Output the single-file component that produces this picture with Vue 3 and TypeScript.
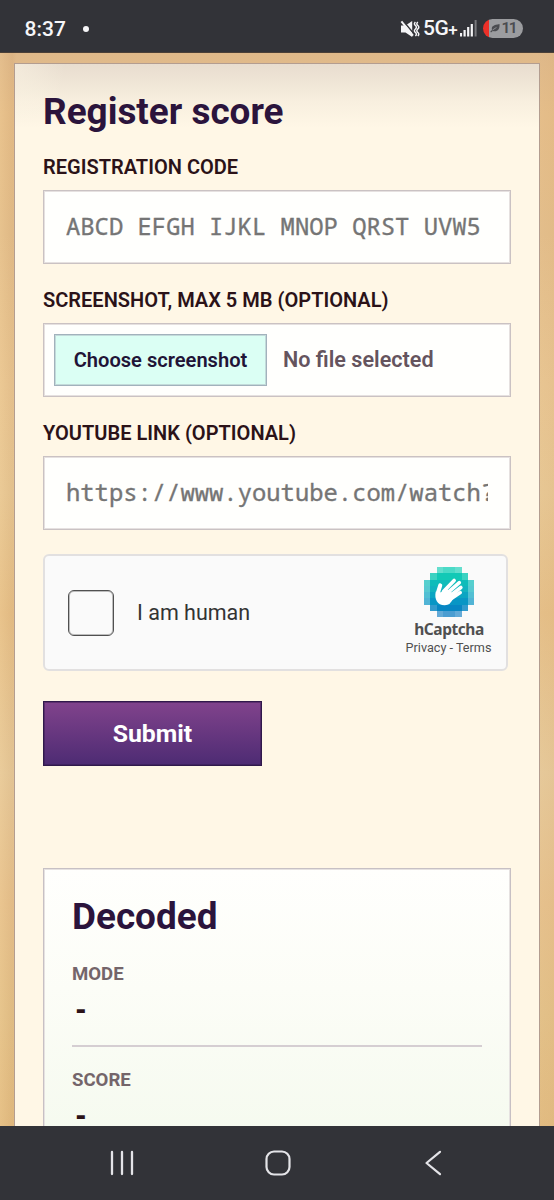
<script setup lang="ts">
interface Cell { x: number; y: number; fill: string; opacity: number }
interface ResultRow { label: string; value: string }

const rows: ResultRow[] = [
  { label: 'Mode', value: '-' },
  { label: 'Score', value: '-' },
]

const insets = [2, 1, 0, 0, 0, 0, 1, 2]
const left = ['#00ccb1', '#12c9b6', '#0fbcba', '#12b3bf', '#0aa5c2', '#0896c5', '#0786c3', '#0075bf']
const cells: Cell[] = []
insets.forEach((inset, y) => {
  for (let x = inset; x < 8 - inset; x++) {
    const edge = x === inset || x === 7 - inset
    const rim = y === 0 || y === 7 || x === 0 || x === 7
    cells.push({ x: x * 4, y: y * 4, fill: left[y], opacity: rim ? (edge && (y === 0 || y === 7) ? 0.6 : 0.7) : edge ? 0.82 : 1 })
  }
})
</script>

<template>
  <div class="screen">
    <header class="status">
      <span class="clock">8:37</span><span class="dot"></span>
      <div class="status-right">
        <svg class="mute" width="20" height="18" viewBox="0 0 20 18">
          <path d="M1 5.5h4.5L12.2 1v16L5.5 12.5H1z" fill="#f4f4f6" />
          <path d="M3 .8L14 14" stroke="#323338" stroke-width="1.5" />
          <path d="M1.4 1.4L13 15.6" stroke="#f4f4f6" stroke-width="2" />
          <path d="M15.4 2q-2 1.8 0 3.5t0 3.5 0 3.5 0 3.5M17.8 2q-2 1.8 0 3.5t0 3.5 0 3.5 0 3.5" fill="none" stroke="#f4f4f6" stroke-width="1.5" />
        </svg>
        <span class="network">5G<span class="plus">+</span></span>
        <svg class="signal" width="17" height="17" viewBox="0 0 17 17">
          <path d="M1 13v3.5M4.6 10v6.5M8.2 7v9.5M11.8 4v12.5" stroke="#f4f4f6" stroke-width="2.2" />
          <path d="M15.6 0v16.5" stroke="#77787c" stroke-width="2" />
        </svg>
        <div class="battery">
          <svg width="10" height="9" viewBox="0 0 10 9">
            <path d="M9.5 0C10 6 7 8 2.8 7L1 8.6.3 7.6 2 6C1 2 4 1 9.5 0z" fill="#4b4c50" />
            <path d="M2.5 6L6.5 3.4" stroke="#9b9c9f" stroke-width=".8" />
          </svg>
          <span>11</span>
        </div>
      </div>
    </header>

    <main class="page">
      <section class="panel">
        <h1>Register score</h1>
        <label class="caption">Registration code</label>
        <div class="field mono"><span>ABCD EFGH IJKL MNOP QRST UVW5</span></div>
        <label class="caption">Screenshot, max 5 MB (optional)</label>
        <div class="field file">
          <button class="choose">Choose screenshot</button>
          <span class="nofile">No file selected</span>
        </div>
        <label class="caption">YouTube link (optional)</label>
        <div class="field mono"><span>https://www.youtube.com/watch?</span></div>

        <div class="captcha">
          <div class="checkbox"></div>
          <span class="human">I am human</span>
          <div class="brand">
            <svg width="50" height="50" viewBox="0 0 32 32">
              <rect v-for="(c, i) in cells" :key="i" :x="c.x" :y="c.y" width="4" height="4" :fill="c.fill" :fill-opacity="c.opacity" shape-rendering="crispEdges" />
              <g stroke="#fff" stroke-linecap="round" stroke-linejoin="round" fill="none">
                <path d="M10.4 11.8L8.9 16.5" stroke-width="2.6" />
                <path d="M12.5 15.7L19.3 8.6M14.5 17L22.6 10M16.5 18.5L23.6 13.1M17.3 20.3L23.2 16.4" stroke-width="2.3" />
              </g>
              <path d="M7.5 15.8L9.8 15.6Q10.5 17 12 15.2L15 14.2L19.4 17.6L18.6 20.2Q17 24.5 13.3 24.5C8.5 24.5 6.5 20.4 7.5 15.8z" fill="#fff" />
            </svg>
            <span class="name">hCaptcha</span>
            <span class="links">Privacy - Terms</span>
          </div>
        </div>

        <button class="submit">Submit</button>

        <section class="decoded">
          <h2>Decoded</h2>
          <div v-for="row in rows" :key="row.label" class="result">
            <span class="key">{{ row.label }}</span>
            <span class="value">{{ row.value }}</span>
          </div>
        </section>
      </section>
    </main>

    <nav class="navbar">
      <svg width="24" height="26" viewBox="0 0 24 26"><path d="M2 2v22M12 2v22M22 2v22" stroke="#e4e4e8" stroke-width="2.3" stroke-linecap="round" /></svg>
      <svg width="26" height="26" viewBox="0 0 26 26"><rect x="1.5" y="1.5" width="23" height="23" rx="7.5" fill="none" stroke="#e4e4e8" stroke-width="2.2" /></svg>
      <svg width="18" height="26" viewBox="0 0 18 26"><path d="M16 1.8L2.5 13L16 24.2" fill="none" stroke="#e4e4e8" stroke-width="2.2" stroke-linecap="round" stroke-linejoin="round" /></svg>
    </nav>
  </div>
</template>

<style>
html, body { margin: 0; overflow: hidden; }
</style>

<style scoped>
* { box-sizing: border-box; }
.screen { width: 554px; height: 1200px; display: flex; flex-direction: column; overflow: hidden; font-family: Roboto, "Liberation Sans", sans-serif; color: #2b1218; }
.status { height: 53px; flex: none; display: flex; align-items: center; padding: 5px 31px 0 24.5px; background: #323338; color: #f6f6f8; border-bottom: 1px solid #4b4038; }
.clock { font-size: 21px; line-height: 24px; font-weight: 500; width: 41.5px; white-space: nowrap; }
.dot { width: 6px; height: 6px; border-radius: 50%; background: #f6f6f8; margin-left: 17px; }
.status-right { margin-left: auto; display: flex; align-items: center; }
.network { font-size: 21px; line-height: 24px; font-weight: 500; margin-left: 3px; display: flex; width: 37px; letter-spacing: -.5px; }
.plus { font-size: 17px; padding-top: 2px; }
.signal { margin-right: 6px; }
.battery { width: 40px; height: 19px; border-radius: 10px; background: linear-gradient(90deg, #ec3028 0 6px, #9b9c9f 6px); display: flex; align-items: center; padding-left: 7px; gap: 1.5px; color: #4b4c50; font-size: 15.5px; line-height: 19px; font-weight: 600; letter-spacing: -1.5px; }
.page { flex: 1; min-height: 0; overflow: hidden; padding: 10px 14px 0; background: linear-gradient(90deg, rgba(255,220,160,.15), rgba(180,120,60,.08) 2.2%, transparent 3%, transparent 97%, rgba(200,140,80,.06)), linear-gradient(180deg, #dfb98a 0, #e5be8a 60px, #e3be8b 180px, #e8c592 330px, #e7c794 440px, #e5bf88 560px, #e6c99a 720px, #e6c18d 850px, #e3c189 960px, #e2bc82 100%); }
.panel { height: 1110px; border: 1px solid #b39d90; padding: 0 28px; background: radial-gradient(ellipse 50px 65px at 0 0, rgba(255,249,232,.45), transparent), linear-gradient(180deg, #e8ddcf 0, #efe5d6 18px, #f8efdf 38px, #fff7e6 64px, #fff7e6 100%); }
h1, h2 { margin: 0; font-size: 36.9px; line-height: 44px; font-weight: 700; color: #2b143c; white-space: nowrap; }
h1 { padding-top: 26px; height: 69px; }
.caption { display: block; height: 22px; line-height: 22px; font-size: 20.05px; font-weight: 600; text-transform: uppercase; white-space: nowrap; margin: 25px 0 12px; color: #2b1218; }
h1 + .caption { margin-top: 23px; }
.field { height: 74px; border: 1px solid #cac2c3; box-shadow: inset 0 0 0 1px #e6e1e0; background: #fffffd; padding: 0 22px 0 22px; }
.mono { font-family: "Noto Sans Mono", "DejaVu Sans Mono", monospace; font-size: 23.85px; line-height: 70px; color: #757575; -webkit-text-stroke: .35px #757575; }
.mono span { display: block; overflow: hidden; white-space: nowrap; }
.file { display: flex; align-items: center; padding: 0 10px 1px; }
.choose { font: 600 20.1px/50px Roboto, sans-serif; width: 213px; height: 52px; padding: 0; border: 1px solid #a2b2bc; box-shadow: inset 0 0 0 1px #c3dbda; background: #dbfff4; color: #211437; white-space: nowrap; }
.nofile { margin-left: 16px; font-size: 21.6px; font-weight: 600; color: #65545e; white-space: nowrap; padding-bottom: 1px; }
.captcha { width: 465px; height: 117px; margin-top: 24px; border: 2px solid #e2e0e0; border-radius: 6px; background: #fafafa; display: flex; align-items: center; padding: 0 0 0 23px; }
.checkbox { width: 46px; height: 46px; border: 1px solid #505050; box-shadow: inset 0 0 0 1px #bdbdbd; border-radius: 6px; }
.human { margin-left: 23px; font-size: 21.5px; color: #333; white-space: nowrap; }
.brand { width: 90px; margin: 0 12px 0 auto; height: 91px; display: flex; flex-direction: column; align-items: center; white-space: nowrap; }
.brand svg { flex: none; }
.name { font: 700 15.5px/19px "Noto Sans", sans-serif; letter-spacing: -.45px; margin-top: 3px; color: #505050; }
.links { font-size: 12.65px; line-height: 16px; margin-top: 1px; padding-right: 1px; color: #505050; }
.submit { display: block; width: 219px; height: 65px; margin: 30px 0 0; border: 1px solid #30194b; box-shadow: inset 0 0 0 1px rgba(48,25,75,.45); background: linear-gradient(#81438c, #4d2b73); color: #fff; font: 700 24.8px/62px Roboto, sans-serif; padding: 0; }
.decoded { margin-top: 102px; height: 420px; border: 1px solid #c7c0c4; box-shadow: inset 0 0 0 1px #e6e2e1; padding: 26px 28px; background: linear-gradient(#fffffd, #fcfdf7 120px, #f5faef 270px, #effaf0 100%); }
.result { height: 106px; border-bottom: 2px solid #d5ced2; display: flex; flex-direction: column; }
h2 + .result { height: 108px; padding-top: 3px; }
.key { text-transform: uppercase; font-size: 18.6px; line-height: 22px; font-weight: 700; color: #74656a; padding-top: 21px; }
.result + .result .key { padding-top: 22px; }
.value { font: 700 26px/26px "DejaVu Sans Mono", monospace; padding: 12px 0 0 1px; }
.navbar { height: 74px; flex: none; background: #323338; position: relative; z-index: 1; display: flex; align-items: center; padding-left: 110px; }
.navbar svg:nth-child(2) { margin-left: 130.5px; }
.navbar svg:nth-child(3) { margin-left: 133.5px; }
</style>
